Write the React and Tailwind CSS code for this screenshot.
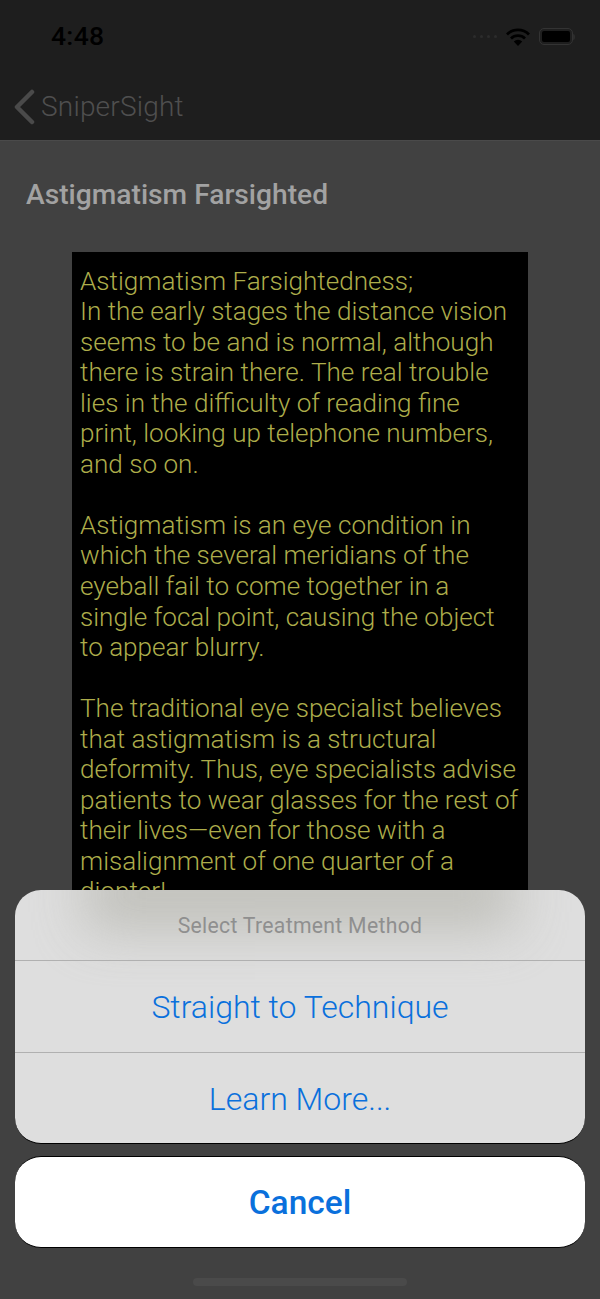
import React from "react";

const paragraphs = [
  ["Astigmatism Farsightedness;", "In the early stages the distance vision", "seems to be and is normal, although", "there is strain there. The real trouble", "lies in the difficulty of reading fine", "print, looking up telephone numbers,", "and so on."],
  ["Astigmatism is an eye condition in", "which the several meridians of the", "eyeball fail to come together in a", "single focal point, causing the object", "to appear blurry."],
  ["The traditional eye specialist believes", "that astigmatism is a structural", "deformity. Thus, eye specialists advise", "patients to wear glasses for the rest of", "their lives—even for those with a", "misalignment of one quarter of a", "diopter!"],
];

export default function App() {
  return (
    <div className="relative h-[1299px] w-[600px] overflow-hidden bg-[#414141] font-['Roboto','Liberation_Sans',sans-serif]">
      <header className="h-[141px] border-b border-[#4a4a4a] bg-[#1e1e1e]">
        <div className="flex h-[73px] items-center justify-between pl-[51px] pr-[25px]">
          <span className="text-[26.5px] font-medium leading-none tracking-[0.3px] text-black">4:48</span>
          <div className="flex items-center gap-[9px]">
            <div className="flex gap-[4px]">
              <span className="size-[3px] rounded-full bg-[#2c2c2c]"></span>
              <span className="size-[3px] rounded-full bg-[#2c2c2c]"></span>
              <span className="size-[3px] rounded-full bg-[#2c2c2c]"></span>
              <span className="size-[3px] rounded-full bg-[#2c2c2c]"></span>
            </div>
            <svg width="24" height="18" viewBox="0 0 24 18" className="text-black">
              <path d="M1 6.5a15.5 15.5 0 0 1 22 0" fill="none" stroke="currentColor" strokeWidth="2.8" />
              <path d="M5 10.5a10 10 0 0 1 14 0" fill="none" stroke="currentColor" strokeWidth="2.8" />
              <path d="M12 18l-4.2-4.6a6 6 0 0 1 8.4 0z" fill="currentColor" />
            </svg>
            <div className="flex items-center">
              <div className="rounded-[5px] border border-[#333] p-[2px]">
                <div className="h-[11px] w-[28px] rounded-[2px] bg-black"></div>
              </div>
              <div className="h-[6px] w-[2px] rounded-r-sm bg-[#2c2c2c]"></div>
            </div>
          </div>
        </div>
        <div className="flex h-[67px] items-center pl-[13px]">
          <svg width="22" height="36" viewBox="0 0 22 36" fill="none" stroke="#4a4a4a" strokeWidth="4.5" strokeLinecap="round" strokeLinejoin="round">
            <path d="M19 3L4 18l15 15" />
          </svg>
          <span className="ml-[6px] text-[28px] font-light leading-none tracking-[0.2px] text-[#4f4f4f]">SniperSight</span>
        </div>
      </header>

      <h1 className="mt-[38px] ml-[26px] text-[28.2px] font-medium leading-[32px] text-[#a2a2a2]">Astigmatism Farsighted</h1>

      <div className="mx-auto mt-[41px] w-[456px] bg-black pt-[13.5px] pb-[13px] pl-[8px] text-[26.1px] font-light leading-[30.55px] text-[#adad4b]">
        {paragraphs.map((lines, i) => (
          <p key={i} className="mb-[30.55px] whitespace-nowrap">
            {lines.map((l) => (
              <span key={l} className="block">{l}</span>
            ))}
          </p>
        ))}
      </div>

      <div className="absolute inset-x-[15px] top-[890px] flex flex-col gap-[12px]">
        <div className="relative overflow-hidden rounded-[26px] border-b border-black bg-[#dedede]">
          <div className="absolute left-[70px] right-[70px] -top-[30px] h-[70px] bg-[#b4b4ac] opacity-70 blur-[26px]"></div>
          <div className="relative flex h-[71px] items-center justify-center border-b border-[#b0b0b0] pt-[2px] text-[21.2px] tracking-[0.3px] text-[#8f8f8f]">Select Treatment Method</div>
          <div className="relative flex h-[92px] items-center justify-center border-b border-[#b0b0b0] text-[32px] font-light text-[#0a70dc]">Straight to Technique</div>
          <div className="relative flex h-[90px] items-center justify-center pt-[1px] text-[32px] font-light text-[#0a70dc]">Learn More...</div>
        </div>
        <div className="flex h-[92px] items-center justify-center rounded-[26px] border-y border-black bg-white pt-[2px] text-[33.5px] font-medium text-[#0a70dc]">Cancel</div>
      </div>

      <div className="absolute bottom-[13px] left-[193px] h-[8px] w-[214px] rounded-full bg-[#4a4a4a]"></div>
    </div>
  );
}
